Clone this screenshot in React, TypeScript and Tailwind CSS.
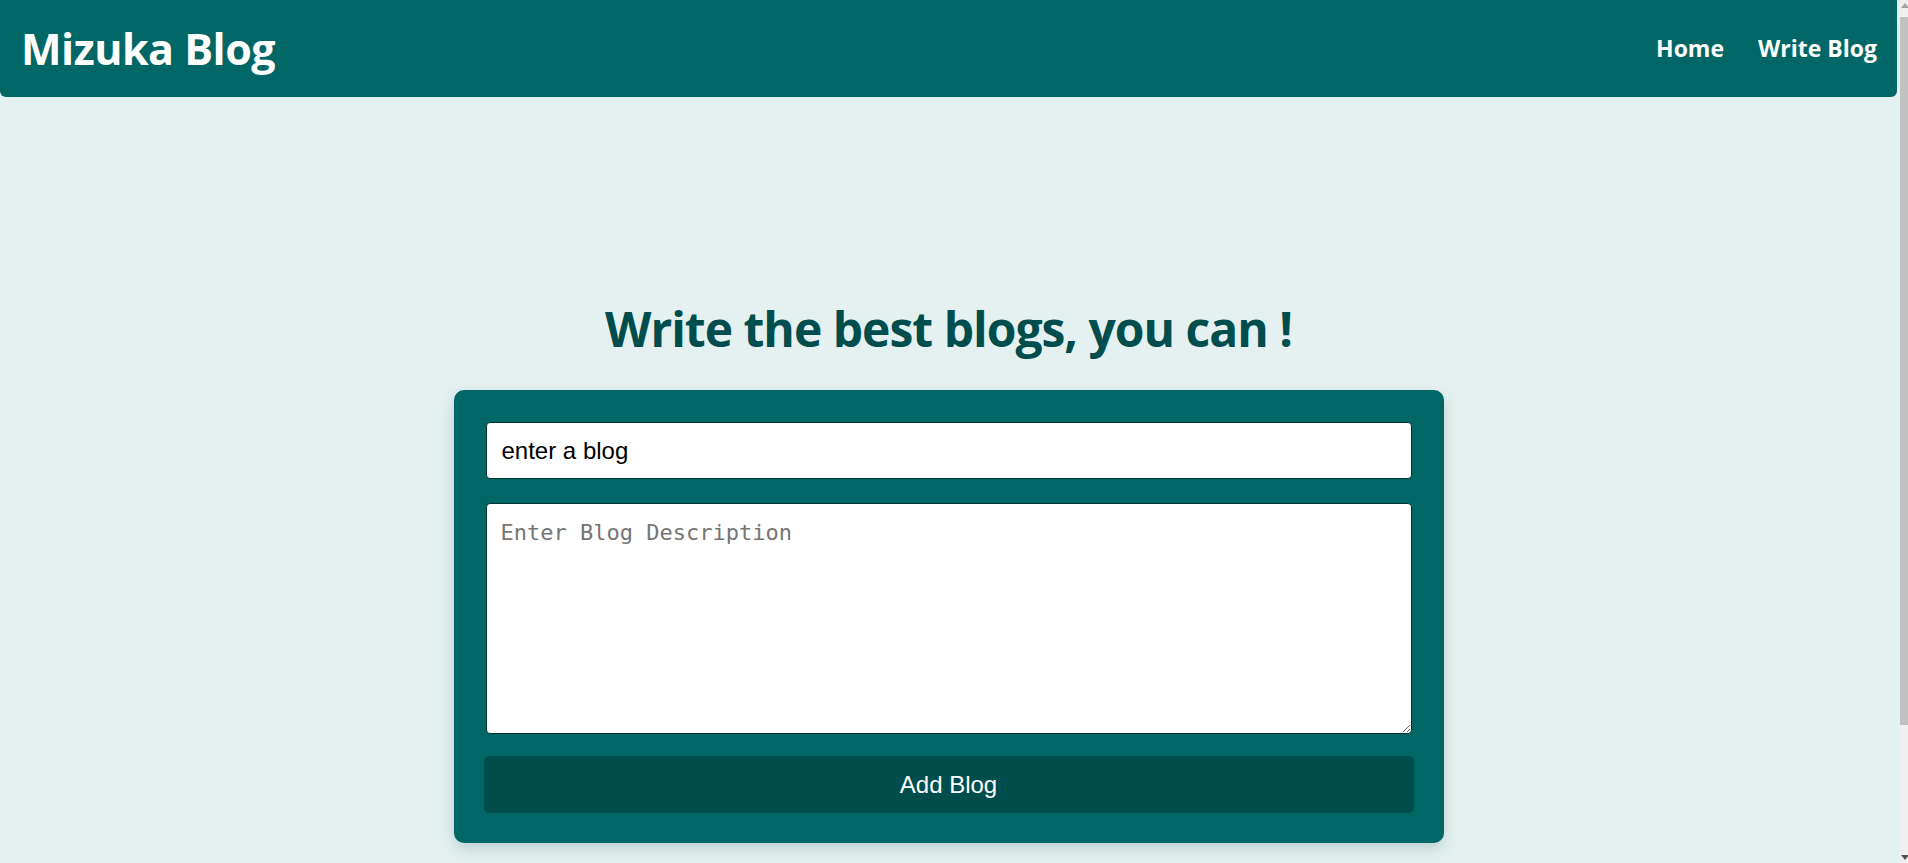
import { useState } from "react";

function Navbar() {
  return (
    <nav className="flex h-[97px] items-center justify-between rounded-b-[6px] bg-[#006666] pl-[21px] pr-[20px] text-white">
      <h1 className="font-['Open_Sans',sans-serif] text-[43px] font-bold leading-none tracking-[-0.5px]">Mizuka Blog</h1>
      <ul className="flex items-center gap-[34px] font-['Open_Sans',sans-serif] text-[23px] font-bold">
        <li className="cursor-pointer">Home</li>
        <li className="cursor-pointer">Write Blog</li>
      </ul>
    </nav>
  );
}

// fake browser scrollbar seen at the right edge of the screenshot
function Scrollbar() {
  return (
    <div className="fixed right-0 top-0 h-screen w-[8px] bg-[#f0f0f0]">
      <div className="absolute left-[1px] top-[3px] h-0 w-0 border-x-[4px] border-b-[5px] border-x-transparent border-b-[#a3a3a3]" />
      <div className="absolute left-0 top-[17px] h-[708px] w-full bg-[#c1c1c1]" />
      <div className="absolute bottom-[3px] left-[1px] h-0 w-0 border-x-[4px] border-t-[5px] border-x-transparent border-t-[#505050]" />
    </div>
  );
}

export default function App() {
  const [title, setTitle] = useState("enter a blog");
  const [description, setDescription] = useState("");

  return (
    <div className="min-h-screen bg-[#e5f1f1]">
      <div className="mr-[11px]">
        <Navbar />

        <main className="flex flex-col items-center pt-[207px]">
          <h2 className="mb-[36px] font-['Open_Sans',sans-serif] text-[48px] font-bold leading-[50px] tracking-[-1px] text-[#004d4d]">
            Write the best blogs, you can !
          </h2>

          <form
            onSubmit={(e) => e.preventDefault()}
            className="flex w-[990px] flex-col gap-5 rounded-[10px] bg-[#006666] p-[30px] shadow-[0_6px_14px_rgba(0,60,60,0.18)]"
          >
            <input
              value={title}
              onChange={(e) => setTitle(e.target.value)}
              className="m-[2px] h-[57px] rounded-[4px] border border-[#003333] bg-white px-[15px] font-['Liberation_Sans',Arial,sans-serif] text-[24px] text-black outline-none"
            />
            <textarea
              value={description}
              onChange={(e) => setDescription(e.target.value)}
              placeholder="Enter Blog Description"
              className="m-[2px] h-[231px] resize-y rounded-[4px] border border-[#003333] bg-white px-[14px] py-[12px] font-['DejaVu_Sans_Mono',monospace] text-[22px] text-black outline-none placeholder:text-[#757575]"
            />
            <button
              type="submit"
              className="h-[57px] rounded-[5px] bg-[#004d4d] font-['Liberation_Sans',Arial,sans-serif] text-[24px] text-white"
            >
              Add Blog
            </button>
          </form>
        </main>
      </div>
      <Scrollbar />
    </div>
  );
}
